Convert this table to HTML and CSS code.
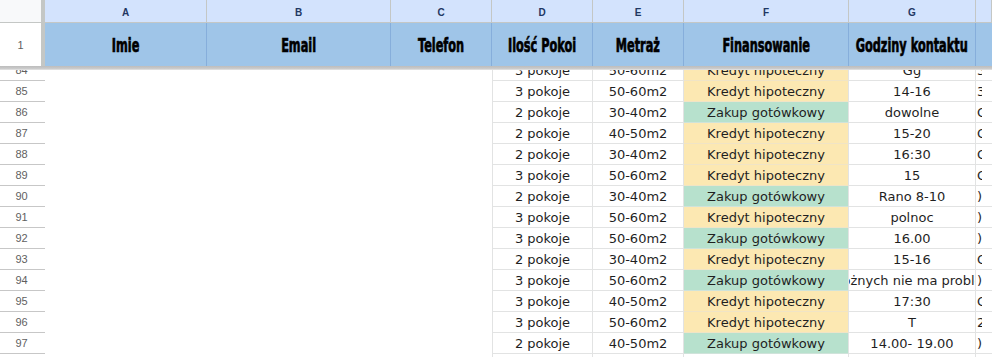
FILE: index.html
```html
<!DOCTYPE html>
<html lang="pl">
<head>
<meta charset="utf-8">
<title>Arkusz</title>
<link rel="stylesheet" href="styles.css">
</head>
<body>
<div class="sheet">
  <div class="grid colhead">
    <div class="corner"></div>
    <div class="letter">A</div>
    <div class="letter">B</div>
    <div class="letter">C</div>
    <div class="letter">D</div>
    <div class="letter">E</div>
    <div class="letter">F</div>
    <div class="letter">G</div>
    <div class="letter"></div>
  </div>
  <div class="grid frozen">
    <div class="rownum frozen-num">1</div>
    <div class="hcell"><span>Imie</span></div>
    <div class="hcell"><span>Email</span></div>
    <div class="hcell"><span>Telefon</span></div>
    <div class="hcell"><span>Ilość Pokoi</span></div>
    <div class="hcell"><span>Metraż</span></div>
    <div class="hcell"><span>Finansowanie</span></div>
    <div class="hcell"><span>Godziny kontaktu</span></div>
    <div class="hcell"></div>
  </div>
  <div class="freeze-bar"></div>
  <div class="body">
    <div class="rows">
      <div class="grid row"><div class="rownum">84</div><div class="blank"></div><div class="blank"></div><div class="blank"></div><div class="cell">3 pokoje</div><div class="cell">50-60m2</div><div class="cell kredyt">Kredyt hipoteczny</div><div class="cell">Gg</div><div class="cell edge"><span>3</span></div></div>
      <div class="grid row"><div class="rownum">85</div><div class="blank"></div><div class="blank"></div><div class="blank"></div><div class="cell">3 pokoje</div><div class="cell">50-60m2</div><div class="cell kredyt">Kredyt hipoteczny</div><div class="cell">14-16</div><div class="cell edge"><span>3</span></div></div>
      <div class="grid row"><div class="rownum">86</div><div class="blank"></div><div class="blank"></div><div class="blank"></div><div class="cell">2 pokoje</div><div class="cell">30-40m2</div><div class="cell zakup">Zakup gotówkowy</div><div class="cell">dowolne</div><div class="cell edge"><span>C</span></div></div>
      <div class="grid row"><div class="rownum">87</div><div class="blank"></div><div class="blank"></div><div class="blank"></div><div class="cell">2 pokoje</div><div class="cell">40-50m2</div><div class="cell kredyt">Kredyt hipoteczny</div><div class="cell">15-20</div><div class="cell edge"><span>C</span></div></div>
      <div class="grid row"><div class="rownum">88</div><div class="blank"></div><div class="blank"></div><div class="blank"></div><div class="cell">2 pokoje</div><div class="cell">30-40m2</div><div class="cell kredyt">Kredyt hipoteczny</div><div class="cell">16:30</div><div class="cell edge"><span>C</span></div></div>
      <div class="grid row"><div class="rownum">89</div><div class="blank"></div><div class="blank"></div><div class="blank"></div><div class="cell">3 pokoje</div><div class="cell">50-60m2</div><div class="cell kredyt">Kredyt hipoteczny</div><div class="cell">15</div><div class="cell edge"><span>C</span></div></div>
      <div class="grid row"><div class="rownum">90</div><div class="blank"></div><div class="blank"></div><div class="blank"></div><div class="cell">2 pokoje</div><div class="cell">30-40m2</div><div class="cell zakup">Zakup gotówkowy</div><div class="cell">Rano 8-10</div><div class="cell edge"><span>)</span></div></div>
      <div class="grid row"><div class="rownum">91</div><div class="blank"></div><div class="blank"></div><div class="blank"></div><div class="cell">3 pokoje</div><div class="cell">50-60m2</div><div class="cell kredyt">Kredyt hipoteczny</div><div class="cell">polnoc</div><div class="cell edge"><span>)</span></div></div>
      <div class="grid row"><div class="rownum">92</div><div class="blank"></div><div class="blank"></div><div class="blank"></div><div class="cell">3 pokoje</div><div class="cell">50-60m2</div><div class="cell zakup">Zakup gotówkowy</div><div class="cell">16.00</div><div class="cell edge"><span>)</span></div></div>
      <div class="grid row"><div class="rownum">93</div><div class="blank"></div><div class="blank"></div><div class="blank"></div><div class="cell">2 pokoje</div><div class="cell">30-40m2</div><div class="cell kredyt">Kredyt hipoteczny</div><div class="cell">15-16</div><div class="cell edge"><span>C</span></div></div>
      <div class="grid row"><div class="rownum">94</div><div class="blank"></div><div class="blank"></div><div class="blank"></div><div class="cell">3 pokoje</div><div class="cell">50-60m2</div><div class="cell zakup">Zakup gotówkowy</div><div class="cell clip"><span>W różnych nie ma problemu</span></div><div class="cell edge"><span>)</span></div></div>
      <div class="grid row"><div class="rownum">95</div><div class="blank"></div><div class="blank"></div><div class="blank"></div><div class="cell">3 pokoje</div><div class="cell">40-50m2</div><div class="cell kredyt">Kredyt hipoteczny</div><div class="cell">17:30</div><div class="cell edge"><span>C</span></div></div>
      <div class="grid row"><div class="rownum">96</div><div class="blank"></div><div class="blank"></div><div class="blank"></div><div class="cell">3 pokoje</div><div class="cell">50-60m2</div><div class="cell kredyt">Kredyt hipoteczny</div><div class="cell">T</div><div class="cell edge"><span>2</span></div></div>
      <div class="grid row"><div class="rownum">97</div><div class="blank"></div><div class="blank"></div><div class="blank"></div><div class="cell">2 pokoje</div><div class="cell">40-50m2</div><div class="cell zakup">Zakup gotówkowy</div><div class="cell">14.00- 19.00</div><div class="cell edge"><span>)</span></div></div>
      <div class="grid row"><div class="rownum">98</div><div class="blank"></div><div class="blank"></div><div class="blank"></div><div class="cell"></div><div class="cell"></div><div class="cell"></div><div class="cell"></div><div class="cell edge"></div></div>
    </div>
  </div>
</div>
</body>
</html>
```

FILE: styles.css
```css
* { box-sizing: border-box; }
html, body { margin: 0; padding: 0; background: #fff; }
body { width: 992px; height: 357px; overflow: hidden; }

.sheet {
  width: 992px;
  height: 357px;
  display: flex;
  flex-direction: column;
  overflow: hidden;
}

.grid {
  display: grid;
  grid-template-columns: 45px 162px 184px 101px 101px 91px 165px 127px 16px;
}

/* column letters */
.colhead { height: 23px; flex: none; }
.corner {
  background: #f8f9fa;
  border-right: 4px solid #c4c7c5;
  border-bottom: 1px solid #c4c7c5;
}
.letter {
  background: #d3e3fd;
  border-right: 1px solid #c4c7c5;
  border-bottom: 1px solid #c4c7c5;
  display: flex;
  align-items: center;
  justify-content: center;
  font-family: "Liberation Sans", Arial, sans-serif;
  font-weight: bold;
  font-size: 10px;
  color: #1f3763;
  padding-top: 2px;
}

/* frozen header row */
.frozen { height: 43px; flex: none; }
.rownum {
  display: flex;
  align-items: center;
  justify-content: center;
  font-family: "Liberation Sans", Arial, sans-serif;
  font-size: 11px;
  color: #5f5f5f;
  background: #fff;
  border-bottom: 1px solid #c7c7c7;
  padding-right: 2px;
}
.frozen-num {
  border-right: 4px solid #c4c7c5;
  border-bottom: none;
  padding-right: 0;
}
.hcell {
  background: #9fc5e8;
  border-right: 1px solid #86aedb;
  display: flex;
  align-items: center;
  justify-content: center;
  font-family: "DejaVu Sans Condensed", "DejaVu Sans", sans-serif;
  font-weight: bold;
  font-size: 17px;
  color: #000;
  white-space: nowrap;
  overflow: hidden;
}
.hcell span {
  display: inline-block;
  transform: scale(0.74, 1.1);
  -webkit-text-stroke: 0.6px #000;
  padding-top: 1px;
}
.hcell:last-child { border-right: none; }

.freeze-bar {
  height: 4px;
  flex: none;
  background: linear-gradient(#bdbdbd, #c9c9c9 60%, #e6e6e6);
}

/* scrolled body */
.body { flex: 1; overflow: hidden; }
.rows { margin-top: -10px; }
.row { height: 21px; }
.blank { background: #fff; }
.cell {
  border-right: 1px solid #e2e3e3;
  border-bottom: 1px solid #e2e3e3;
  display: flex;
  align-items: center;
  justify-content: center;
  font-family: "DejaVu Sans", sans-serif;
  font-size: 13px;
  color: #1f1f1f;
  white-space: nowrap;
  overflow: hidden;
}
.row > .blank:nth-child(4) + .cell { border-left: 1px solid #e2e3e3; }
.kredyt { background: #fce8b2; border-bottom-color: #f0e4c6; }
.zakup { background: #b7e1cd; border-bottom-color: #cfe3da; }
.clip span { flex: none; }
.edge {
  justify-content: flex-start;
  border-right: none;
  padding-left: 1px;
}
.edge span {
  display: block;
  width: 5px;
  overflow: hidden;
}
```
